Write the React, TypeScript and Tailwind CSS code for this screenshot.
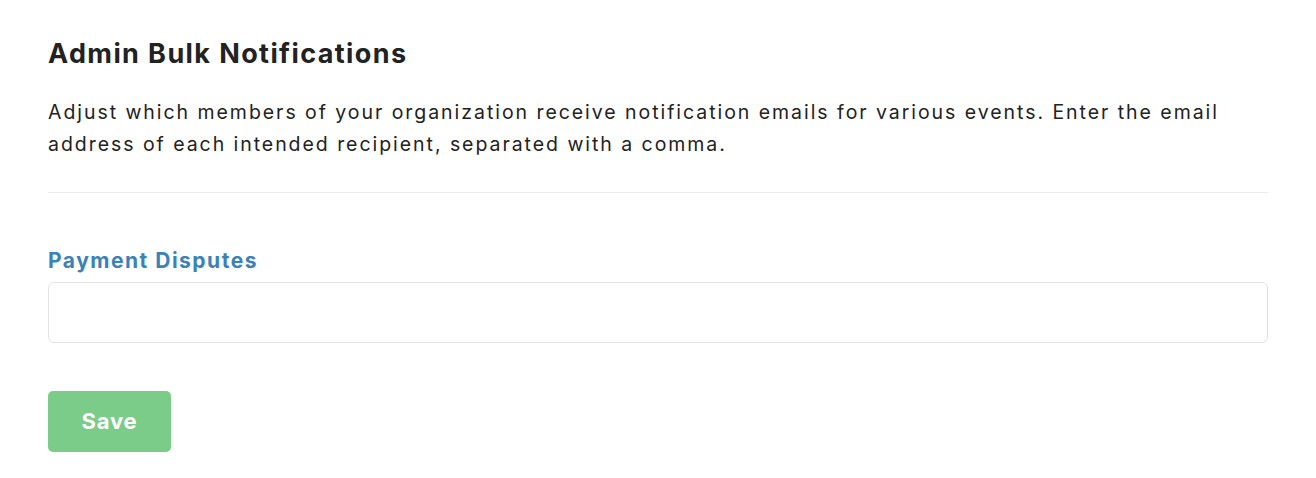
export default function App() {
  return (
    <div
      className="min-h-screen bg-white px-12 pt-[36px] text-[#222]"
      style={{ fontFamily: "Inter, 'Noto Sans', sans-serif" }}
    >
      <h1 className="text-[27px] font-bold leading-9 tracking-[1.4px] text-[#222]">Admin Bulk Notifications</h1>
      <p className="mt-[24px] text-[19.5px] leading-8 tracking-[1.95px] text-[#222]">
        Adjust which members of your organization receive notification emails for various events. Enter the email
        address of each intended recipient, separated with a comma.
      </p>
      <hr className="mt-8 border-t border-[#ececec]" />
      <div className="mt-[54px]">
        <label className="block text-[21px] font-bold leading-7 tracking-[1.5px] text-[#3a82b7]">
          Payment Disputes
        </label>
        <input
          type="text"
          className="mt-[7px] block h-[61px] w-full rounded-md border border-[#e2e2e2] px-4 text-[20px] outline-none"
        />
      </div>
      <button className="mt-12 h-[61px] w-[123px] rounded-[5px] bg-[#7acc88] text-[22px] font-bold tracking-[0.8px] text-white">
        Save
      </button>
    </div>
  );
}
